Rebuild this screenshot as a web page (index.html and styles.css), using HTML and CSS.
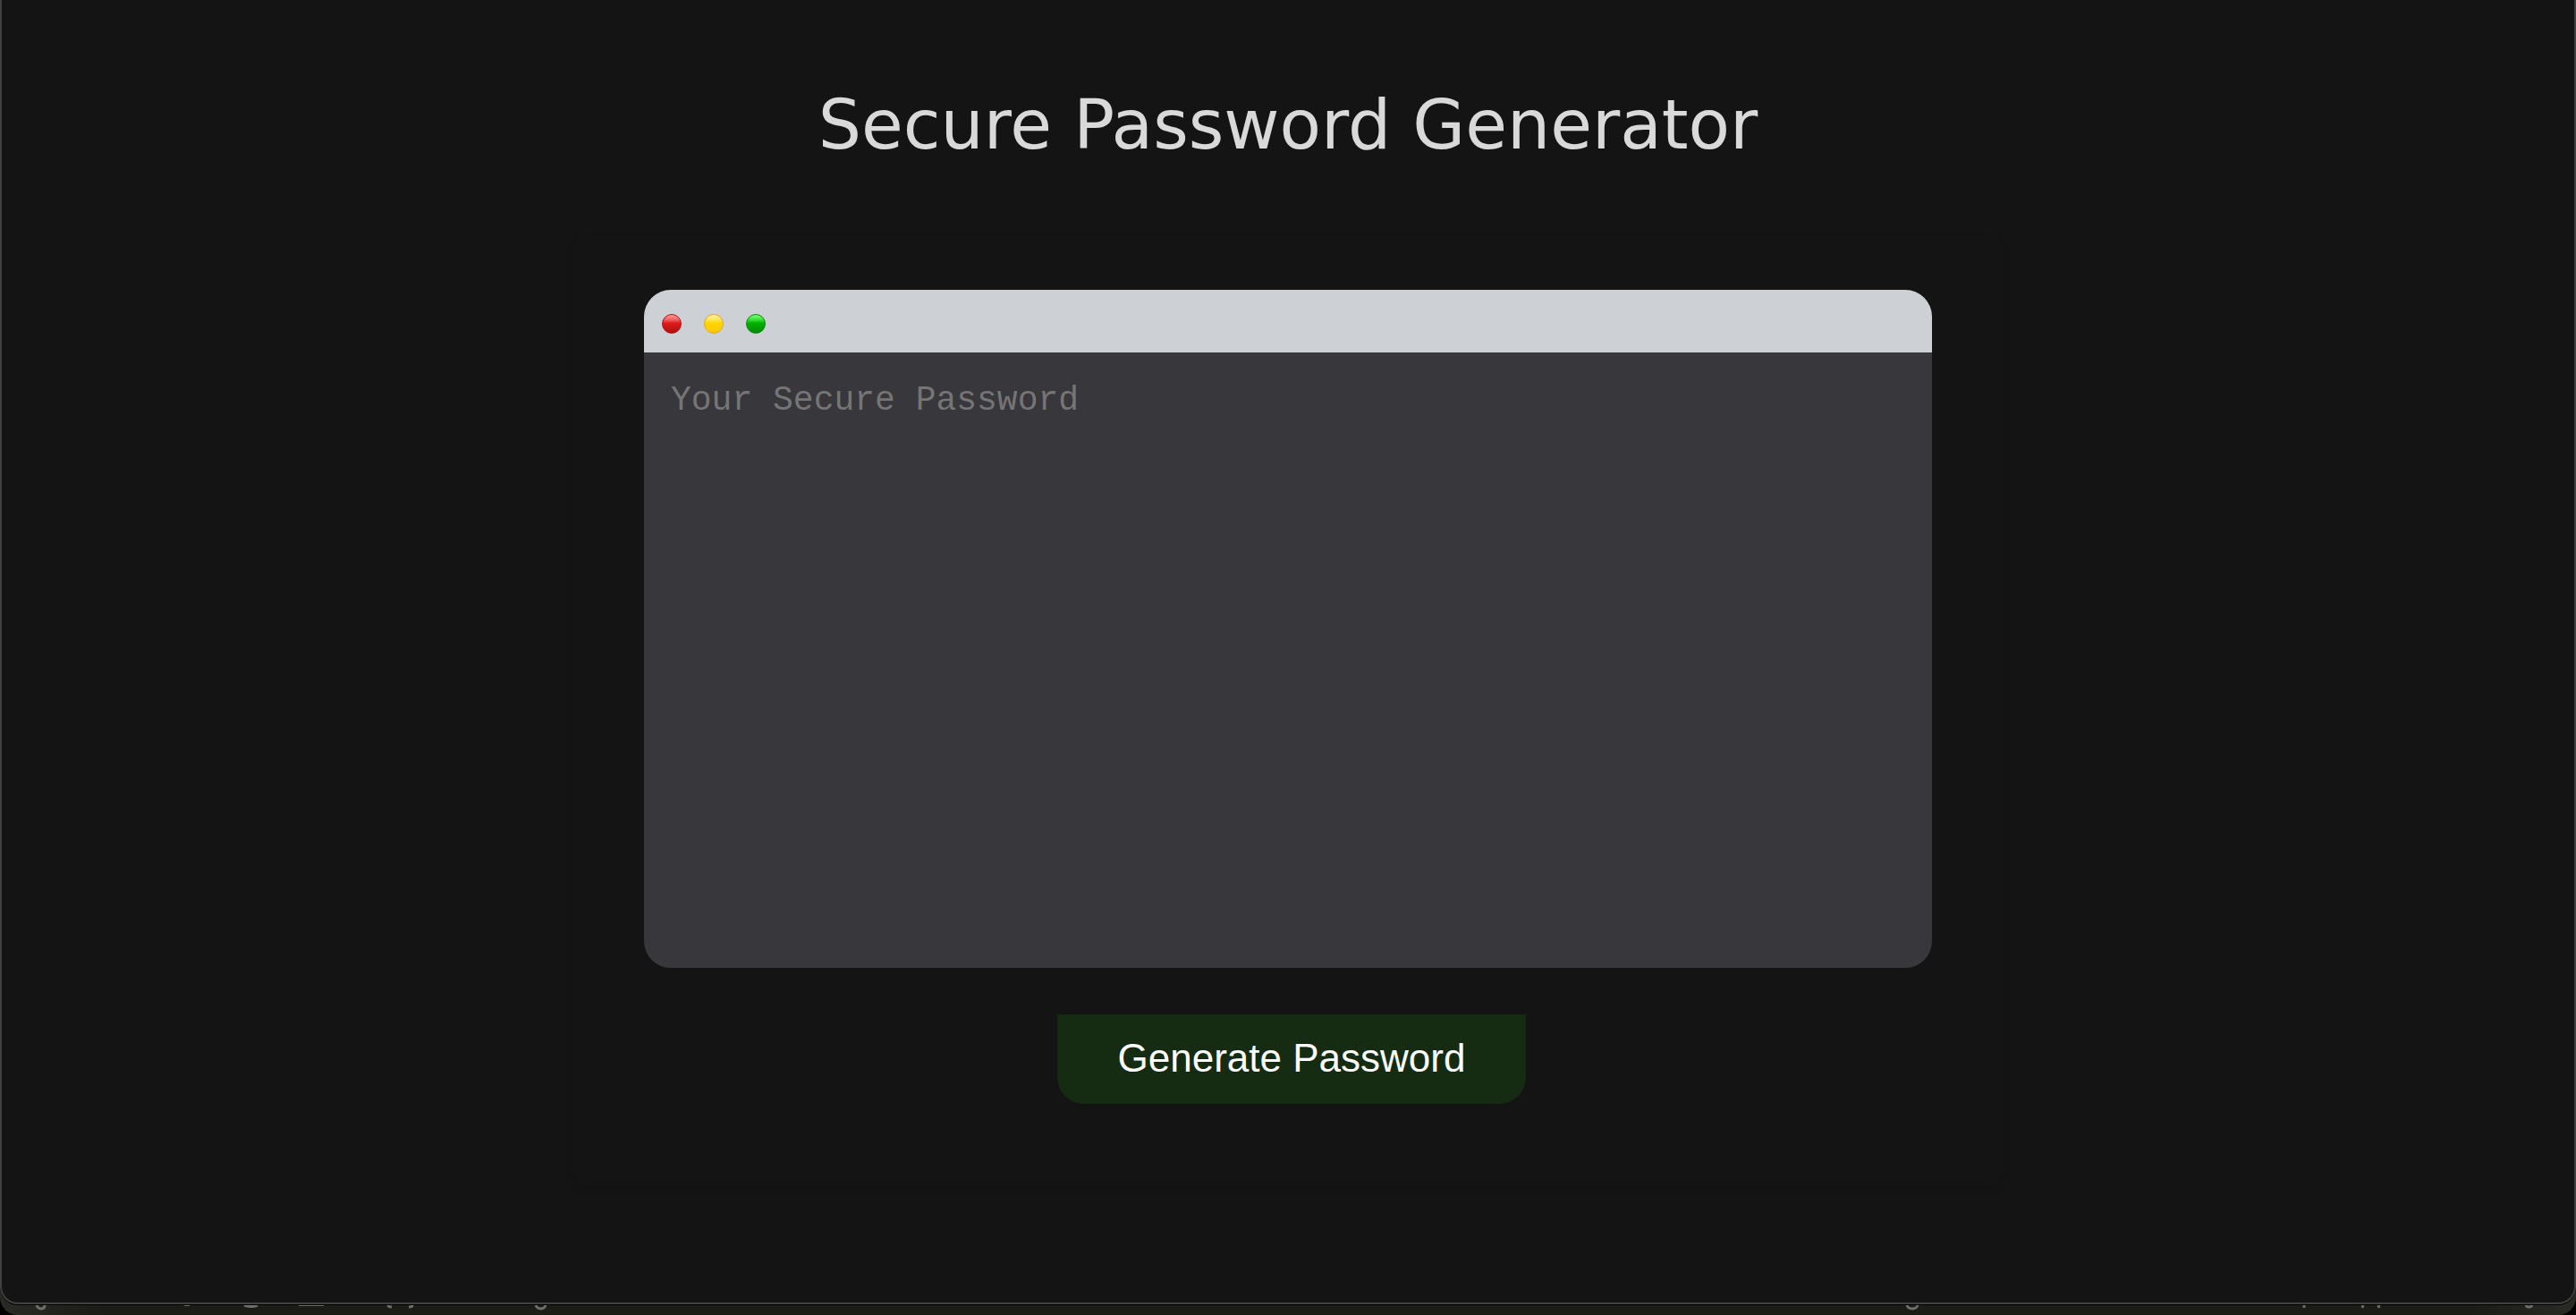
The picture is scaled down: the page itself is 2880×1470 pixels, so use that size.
FILE: index.html
```html
<!DOCTYPE html>
<html lang="en">
<head>
<meta charset="utf-8">
<title>Secure Password Generator</title>
<link rel="stylesheet" href="styles.css">
</head>
<body>
<div class="page">
  <h1 class="title">Secure Password Generator</h1>
  <main class="card">
    <section class="window">
      <div class="titlebar">
        <span class="light light-red"></span>
        <span class="light light-yellow"></span>
        <span class="light light-green"></span>
      </div>
      <textarea class="output" placeholder="Your Secure Password" aria-label="Your Secure Password" readonly></textarea>
    </section>
    <button class="generate" type="button">Generate Password</button>
  </main>
</div>
<div class="backdrop">
  <svg class="glyphs" width="700" height="10" viewBox="0 0 700 10" aria-hidden="true">
    <path d="M41 0q1 4 5 4q4 0 4-4M273 0q8 3 15 0M434 0q0 2 4 2M461 0q0 2-4 2M599 0q1 4 6 4q4 0 5-4"/>
    <path class="thin" d="M206 0h6M334 0h28"/>
  </svg>
  <svg class="glyphs" width="780" height="10" viewBox="0 0 780 10" aria-hidden="true">
    <path d="M32 0q1 4 6 4q5 0 6-4M724 0q1 2 3 2q3 0 4-2"/>
    <path d="M476 0v3M542 0l-1 3M559 0l1 3"/>
  </svg>
</div>
</body>
</html>
```
FILE: styles.css
```css
* { box-sizing: border-box; }
body {
  margin: 0;
  min-height: 100vh;
  display: flex;
  flex-direction: column;
  background: #000;
  font-family: "Liberation Sans", Arial, sans-serif;
}
.page {
  position: relative;
  z-index: 1;
  flex: 1;
  display: flex;
  flex-direction: column;
  align-items: center;
  padding: 98px 0 0;
  background: #141414;
  border: solid #414141;
  border-width: 0 2px 2px;
  border-radius: 0 0 20px 20px;
  box-shadow: 0 1px 0 #000;
}
.title {
  margin: 0;
  font: 400 76px/84px "DejaVu Sans", sans-serif;
  color: #d9d9d9;
}
.card {
  width: 1600px;
  max-width: 100%;
  margin-top: 82px;
  padding: 60px 80px 92px;
  display: flex;
  flex-direction: column;
  align-items: center;
  border-radius: 20px;
  box-shadow: 0 4px 8px rgba(0, 0, 0, 0.1);
}
.window {
  width: 100%;
  display: flex;
  flex-direction: column;
  border-radius: 30px;
  overflow: hidden;
  background: #38373b;
}
.titlebar {
  height: 70px;
  display: flex;
  align-items: center;
  gap: 25px;
  padding: 6px 20px 0;
  background: #cdd0d5;
}
.light {
  width: 22px;
  height: 22px;
  border-radius: 50%;
}
.light-red {
  border: 1px solid #b01313;
  background: linear-gradient(#f99 0%, #ef5a5a 30%, #e01b1b 45%, #b01010 100%);
}
.light-yellow {
  border: 1px solid #e8a91a;
  background: linear-gradient(#fff0a0 0%, #ffe352 30%, #ffd500 45%, #ffc800 100%);
}
.light-green {
  border: 1px solid #078a0a;
  background: linear-gradient(#7dff7d 0%, #30dc30 30%, #00b200 45%, #008a00 100%);
}
.output {
  height: 688px;
  padding: 32px 30px;
  border: 0;
  outline: 0;
  resize: none;
  background: transparent;
  color: #d9d9d9;
  font: 400 38px/44px "Liberation Mono", "Courier New", monospace;
}
.output::placeholder {
  color: #757575;
  opacity: 1;
}
.generate {
  height: 100px;
  margin: 52px 0 0 8px;
  padding: 0 68px 2px;
  border: 0;
  border-radius: 0 0 30px 30px;
  background: #162c12;
  color: #fff;
  font: 400 44px/52px "Liberation Sans", Arial, sans-serif;
}
.backdrop {
  display: flex;
  justify-content: space-between;
  height: 42px;
  margin-top: -30px;
  padding-top: 31px;
  border-radius: 0 0 20px 20px;
  background: linear-gradient(90deg, #2a2b24, #1c1c17 4%, #1c1c17 96%, #2a2b24);
}
.glyphs {
  fill: none;
  stroke: #6e6e6b;
  stroke-width: 3px;
}
.glyphs .thin {
  stroke-width: 2px;
}
```
